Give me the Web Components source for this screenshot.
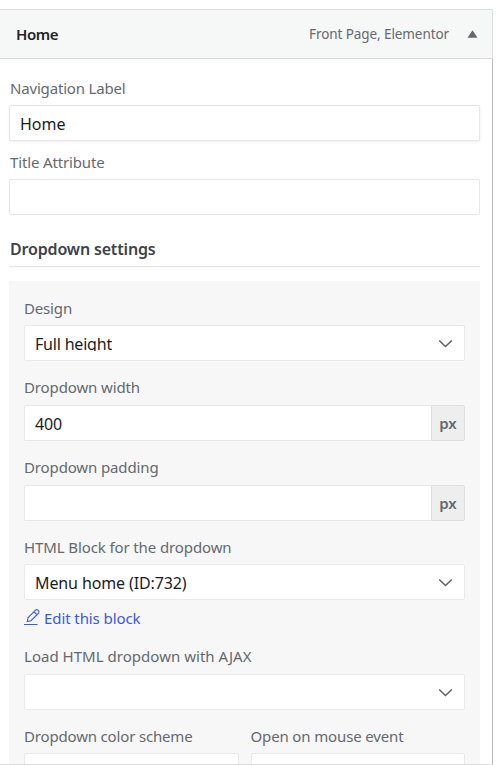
<!DOCTYPE html>
<html lang="en">
<head>
<meta charset="utf-8">
<title>Menu settings</title>
<style>
    html, body {
        margin: 0;
        height: 765px;
        overflow: hidden;
        background: #fff;
    }
    body {
        font: 15px/20px "Noto Sans", "Open Sans", sans-serif;
        color: #646970;
    }
</style>
</head>
<body>
<menu-item>
    <menu-item-bar slot="bar">
        <fit-text slot="title" width="42">Home</fit-text>
        <fit-text slot="type" width="140">Front Page, Elementor</fit-text>
    </menu-item-bar>

    <form-field style="margin-top: 19px; --label-inset: 1px">
        <fit-text slot="label" width="115.5">Navigation Label</fit-text>
        <text-control raised><fit-text width="45.5">Home</fit-text></text-control>
    </form-field>
    <form-field style="margin-top: 11px; --label-inset: 1px">
        <fit-text slot="label" width="94.5">Title Attribute</fit-text>
        <text-control></text-control>
    </form-field>

    <section-title><fit-text width="145.5">Dropdown settings</fit-text></section-title>

    <settings-panel>
        <form-field>
            <fit-text slot="label" width="48">Design</fit-text>
            <select-control clipped><fit-text width="77">Full height</fit-text></select-control>
        </form-field>
        <form-field style="margin-top: 16px; --label-gap: 8px">
            <fit-text slot="label" width="116">Dropdown width</fit-text>
            <text-control unit="px"><fit-text width="27">400</fit-text></text-control>
        </form-field>
        <form-field style="margin-top: 16px; --label-gap: 8px">
            <fit-text slot="label" width="134.5">Dropdown padding</fit-text>
            <text-control unit="px"></text-control>
        </form-field>
        <form-field style="margin-top: 16px">
            <fit-text slot="label" width="207.5">HTML Block for the dropdown</fit-text>
            <select-control><fit-text width="151.5">Menu home (ID:732)</fit-text></select-control>
        </form-field>
        <edit-link><fit-text width="96.5">Edit this block</fit-text></edit-link>
        <form-field style="margin-top: 18px; --label-gap: 8px">
            <fit-text slot="label" width="227.5">Load HTML dropdown with AJAX</fit-text>
            <select-control></select-control>
        </form-field>
        <field-columns>
            <form-field>
                <fit-text slot="label" width="168.5">Dropdown color scheme</fit-text>
                <select-control></select-control>
            </form-field>
            <form-field>
                <fit-text slot="label" width="153">Open on mouse event</fit-text>
                <select-control></select-control>
            </form-field>
        </field-columns>
    </settings-panel>
</menu-item>

<script>
class BaseElement extends HTMLElement {
    constructor(){
        super();
        let template = document.createElement('template');
        template.innerHTML = this._getTemplate();
        this.attachShadow({mode: 'open'}).appendChild(template.content.cloneNode(true));
    }

    _getTemplate(){ return '<slot></slot>' }
}

class MenuItem extends BaseElement {
    _getTemplate(){
        return `
            <style>
                :host {
                    display: block;
                    box-sizing: border-box;
                    width: 493px;
                    height: 765px;
                    padding-top: 9px;
                    border-bottom: 1px solid #dcdcde;
                    overflow: hidden;
                }
                .body {
                    box-sizing: border-box;
                    height: 705px;
                    padding: 0 12px 0 9px;
                    border-right: 1px solid #b9b9bb;
                    overflow: hidden;
                    display: flow-root;
                }
            </style>
            <slot name="bar"></slot>
            <div class="body"><slot></slot></div>
        `
    }
}

class MenuItemBar extends BaseElement {
    _getTemplate(){
        return `
            <style>
                :host {
                    display: flex;
                    align-items: center;
                    box-sizing: border-box;
                    height: 50px;
                    padding: 0 14px 0 16px;
                    border: 1px solid #dcdcde;
                    border-left: 0;
                    background: #f6f7f7;
                }
                .title {
                    flex: 1;
                    font-weight: 600;
                    color: #1d2327;
                }
                .type { font-size: 13.5px; }
                svg { margin: -1px 0 0 18px; }
            </style>
            <div class="title"><slot name="title"></slot></div>
            <div class="type"><slot name="type"></slot></div>
            <svg width="11" height="8" viewBox="0 0 11 8"><path d="M5.5 .2 10.5 7.7H.5z" fill="#646970"/></svg>
        `
    }
}

class FormField extends BaseElement {
    _getTemplate(){
        return `
            <style>
                :host { display: block; }
                .label {
                    height: 20px;
                    padding-left: var(--label-inset, 0);
                    margin-bottom: var(--label-gap, 7px);
                }
            </style>
            <div class="label"><slot name="label"></slot></div>
            <slot></slot>
        `
    }
}

class TextControl extends BaseElement {
    _getTemplate(){
        let unit = this.getAttribute('unit');
        return `
            <style>
                :host {
                    display: flex;
                    height: 36px;
                }
                .value {
                    flex: 1;
                    box-sizing: border-box;
                    padding: 1px 10px 0;
                    border: 1px solid #e7e7e8;
                    border-radius: 2px;
                    background: #fff;
                    color: #1a1c1e;
                    font-size: 16px;
                    line-height: 34px;
                }
                :host([raised]) .value { box-shadow: 0 1px 3px rgba(0, 0, 0, .06); }
                :host([unit]) .value {
                    border-right: 0;
                    border-radius: 2px 0 0 2px;
                }
                .unit {
                    box-sizing: border-box;
                    width: 34px;
                    border: 1px solid #dfdfe0;
                    border-radius: 0 2px 2px 0;
                    background: #eee;
                    font-weight: 600;
                    line-height: 34px;
                    text-align: center;
                }
            </style>
            <div class="value"><slot></slot></div>
            ${unit ? `<div class="unit">${unit}</div>` : ''}
        `
    }
}

class SelectControl extends BaseElement {
    _getTemplate(){
        return `
            <style>
                :host {
                    display: flex;
                    align-items: center;
                    justify-content: space-between;
                    box-sizing: border-box;
                    height: 36px;
                    padding: 0 11px 0 10px;
                    border: 1px solid #e9e9ea;
                    border-radius: 2px;
                    background: #fff;
                    color: #1a1c1e;
                    font-size: 16px;
                }
                .value {
                    height: 24px;
                    line-height: 26px;
                }
                :host([clipped]) .value {
                    height: 18px;
                    line-height: 22px;
                    margin-bottom: 2px;
                    overflow: hidden;
                }
                svg { margin-top: 1px; }
            </style>
            <div class="value"><slot></slot></div>
            <svg width="15" height="10" viewBox="0 0 15 10"><path d="m1.2 1.5 6.3 6 6.3-6" fill="none" stroke="#606367" stroke-width="1.6"/></svg>
        `
    }
}

class SectionTitle extends BaseElement {
    _getTemplate(){
        return `
            <style>
                :host {
                    display: block;
                    margin: 22px 0 14px;
                    padding: 0 0 5px 1px;
                    border-bottom: 1px solid #e3e3e4;
                    color: #3c434a;
                    font-size: 16px;
                    font-weight: 600;
                    line-height: 24px;
                }
            </style>
            <slot></slot>
        `
    }
}

class SettingsPanel extends BaseElement {
    _getTemplate(){
        return `
            <style>
                :host {
                    display: block;
                    padding: 17px 15px 15px;
                    background: #f7f7f7;
                }
            </style>
            <slot></slot>
        `
    }
}

class EditLink extends BaseElement {
    _getTemplate(){
        return `
            <style>
                :host {
                    display: flex;
                    height: 20px;
                    margin-top: 8px;
                    color: #3858e9;
                }
                svg { margin-right: 3px; }
            </style>
            <svg width="17" height="18" viewBox="0 0 17 18" fill="none" stroke="currentColor" stroke-width="1.1">
                <path d="M0 16.5h13.5M4 9.7l7.6-7.6q1.1-1 2.3.1l.7.7q1 1.1 0 2.2L7 12.7l-3.7.8zM10 3.8l2.9 2.9"/>
            </svg>
            <slot></slot>
        `
    }
}

class FieldColumns extends BaseElement {
    _getTemplate(){
        return `
            <style>
                :host {
                    display: grid;
                    grid-template-columns: 1fr 1fr;
                    gap: 12px;
                    margin-top: 16px;
                }
            </style>
            <slot></slot>
        `
    }
}

// Spaces its letters so that the line takes the given width
class FitText extends BaseElement {
    _getTemplate(){
        return `
            <style>
                :host {
                    display: inline-block;
                    white-space: nowrap;
                }
            </style>
            <slot></slot>
        `
    }

    fit(){
        let spare = this.getAttribute('width') - this.getBoundingClientRect().width;
        this.style.letterSpacing = (spare / this.textContent.length) + 'px';
    }
}

window.customElements.define('menu-item', MenuItem)
window.customElements.define('menu-item-bar', MenuItemBar)
window.customElements.define('form-field', FormField)
window.customElements.define('text-control', TextControl)
window.customElements.define('select-control', SelectControl)
window.customElements.define('section-title', SectionTitle)
window.customElements.define('settings-panel', SettingsPanel)
window.customElements.define('edit-link', EditLink)
window.customElements.define('field-columns', FieldColumns)
window.customElements.define('fit-text', FitText)

document.querySelectorAll('fit-text').forEach(text => text.fit())
</script>
</body>
</html>
